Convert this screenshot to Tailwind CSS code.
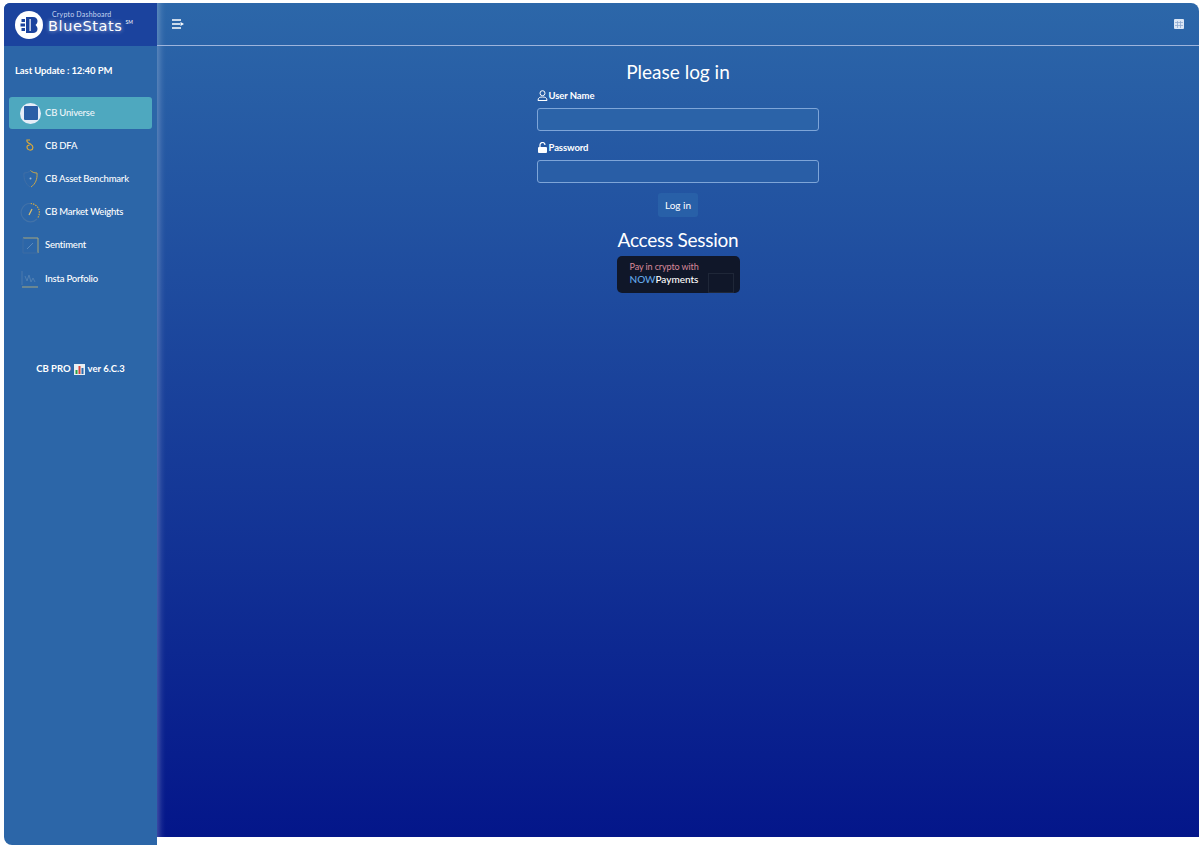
<!DOCTYPE html>
<html lang="en">
<head>
  <meta charset="UTF-8">
  <title>BlueStats</title>
  <script src="https://cdn.jsdelivr.net/npm/@tailwindcss/browser@4"></script>
</head>
<body class="h-[845px] overflow-hidden bg-white font-['Lato',sans-serif] text-white flex pl-[4px] pr-[1px] pt-[3px]">
  <!-- sidebar -->
  <aside class="w-[153px] shrink-0 bg-[#2c66a8] rounded-tl-[6px] rounded-bl-[8px] flex flex-col">
    <div class="h-[43px] shrink-0 rounded-tl-[6px] bg-[#1b439e] flex items-center pl-[11px] gap-[5px]">
      <svg class="w-[28px] h-[28px] shrink-0" viewBox="0 0 28 28">
        <circle cx="14" cy="14" r="14" fill="#fff"/>
        <path d="M11 6h7c3 0 4.500 2 4.500 4 0 2-1 3-2 4 1 1 2 2 2 4 0 2.500-2 4-4.500 4h-7z" fill="#1b439e"/>
        <path d="M14.500 8h1.200v12h-1.200z" fill="#fff"/>
        <path d="M6.500 8h3.500v3H6.500zM5.500 12.500H10v3H5.500zM6.500 17H10v3H6.500z" fill="#1b439e"/>
      </svg>
      <div class="flex flex-col -mt-[4px]">
        <span class="text-[7px] leading-[8px] tracking-[0.2px] text-[#c8d6f0] pl-[4px]">Crypto Dashboard</span>
        <div class="flex items-start">
          <span class="font-['DejaVu_Sans',sans-serif] text-[14.500px] leading-[17px] tracking-[0.6px] [text-shadow:0_0_4px_#ffffffaa]">BlueStats</span>
          <span class="text-[5px] leading-[8px] ml-[3px]">SM</span>
        </div>
      </div>
    </div>
    <p class="mt-[17px] pl-[11px] text-[9.500px] tracking-[-0.1px] leading-[16px] font-bold">Last Update : 12:40 PM</p>
    <nav class="mt-[18px] px-[5px] flex flex-col text-[9.500px] tracking-[-0.2px] font-medium">
      <a class="h-[32px] rounded-[3px] bg-[#4ea8bf] flex items-center pl-[11px] gap-[4px] text-[#eef6fa]">
        <span class="w-[21px] h-[21px] rounded-full bg-[#e6edf8] flex items-center justify-center shrink-0"><span class="w-[14px] h-[14px] bg-[#2a5ea6] rounded-[1px]"></span></span>
        CB Universe
      </a>
      <a class="h-[33.300px] flex items-center pl-[11px] gap-[4px]">
        <svg class="w-[21px] h-[21px] shrink-0" viewBox="0 0 21 21" fill="none" stroke="#d9a93a" stroke-width="1.200"><path d="M6.500 5h3.500M7 5c-1 2 1.500 3 4 4.500 2.500 1.300 2.500 5 0 5.500-2.500.3-4-1-4-3 0-1.500 1.500-2 2.500-1.500"/></svg>
        CB DFA
      </a>
      <a class="h-[33.300px] flex items-center pl-[11px] gap-[4px]">
        <svg class="w-[21px] h-[21px] shrink-0" viewBox="0 0 21 21" fill="none" stroke-width="1"><path d="M4 5c3 0 5-1 6.500-2.500" stroke="#3f6ea6"/><path d="M4 5c-.5 6 1.500 11 6 14" stroke="#3f6ea6"/><path d="M10.500 2.500C12 4 14 5 17 5c.5 6-1.500 11-6 14" stroke="#c9a64a"/><circle cx="10.500" cy="10.500" r="1" fill="#9db8d8"/></svg>
        CB Asset Benchmark
      </a>
      <a class="h-[33.300px] flex items-center pl-[11px] gap-[4px]">
        <svg class="w-[21px] h-[21px] shrink-0" viewBox="0 0 21 21" fill="none" stroke-width="1.200"><path d="M10.500 1.500a9 9 0 0 1 7 14.500" stroke="#c9a64a" stroke-dasharray="1.500 1"/><path d="M17 17a9 9 0 0 1-13 0A9 9 0 0 1 10.500 1.500" stroke="#4272a8"/><path d="M9 13l3-6" stroke="#d9bd70"/></svg>
        CB Market Weights
      </a>
      <a class="h-[33.300px] flex items-center pl-[11px] gap-[4px]">
        <svg class="w-[21px] h-[21px] shrink-0" viewBox="0 0 21 21" fill="none" stroke-width="1"><path d="M3 3h15v15" stroke="#a6a67c"/><path d="M18 18H3V3" stroke="#3d6ca4"/><path d="M7 14l6-6" stroke="#5c8abc"/></svg>
        Sentiment
      </a>
      <a class="h-[33.300px] flex items-center pl-[11px] gap-[4px]">
        <svg class="w-[21px] h-[21px] shrink-0" viewBox="0 0 21 21" fill="none" stroke-width="1"><path d="M2 3v14" stroke="#4b79ad"/><path d="M5 8l2 5 2-6 2 7 2-4 2 4" stroke="#4f7fb3"/><path d="M2 19h16" stroke="#a6a67c"/></svg>
        Insta Porfolio
      </a>
    </nav>
    <p class="mt-[66px] flex items-center justify-center gap-[3px] text-[9.500px] leading-[16px] font-bold">
      CB PRO
      <svg class="w-[11px] h-[11px]" viewBox="0 0 11 11"><rect width="11" height="11" fill="#e8eef2"/><rect x="1.500" y="6" width="2" height="4" fill="#2f9e44"/><rect x="4.500" y="2" width="2" height="8" fill="#d9423a"/><rect x="7.500" y="4" width="2" height="6" fill="#2b6cb0"/></svg>
      ver 6.C.3
    </p>
  </aside>

  <!-- main -->
  <main class="flex-1 h-[834px] rounded-tr-[8px] bg-[linear-gradient(to_bottom,#2c67a9,#04168a)] shadow-[inset_8px_0_7px_-6px_rgba(255,255,255,0.3)] flex flex-col">
    <header class="h-[43px] shrink-0 border-b border-[#9db4dc] flex items-center justify-between pl-[15px] pr-[15px]">
      <svg class="w-[12px] h-[10px] -mt-[1px]" viewBox="0 0 12 10" fill="none" stroke="#fff" stroke-width="1.400"><path d="M0 1h9M0 5h8M0 9h9"/><path d="M8.500 3l3.500 2-3.500 2z" fill="#fff" stroke="none"/></svg>
      <svg class="w-[10px] h-[10px] -mt-[1px]" viewBox="0 0 10 10"><rect width="10" height="10" rx="1" fill="#dbe6f5"/><path d="M1 3.500h8M1 6.500h8M3.500 2v7M6.500 2v7" stroke="#8fabd2" stroke-width=".8"/></svg>
    </header>
    <section class="w-[283px] mx-auto flex flex-col items-center">
      <h2 class="mt-[13px] text-[19px] leading-[26px]">Please log in</h2>
      <label class="self-start mt-[4px] flex items-center gap-[1px] text-[9.500px] tracking-[-0.1px] leading-[13px] font-bold">
        <svg class="w-[11px] h-[11px]" viewBox="0 0 11 11" fill="none" stroke="#fff"><circle cx="5.500" cy="3.200" r="2.500"/><path d="M1 10.500c0-3 2-3.500 4.500-3.500S10 7.500 10 10.500z"/></svg>
        User Name
      </label>
      <input type="text" class="mt-[6px] self-start w-[282px] h-[23px] rounded-[3px] border border-[#7ea5d8] bg-[#2b63a8]">
      <label class="self-start mt-[10px] flex items-center gap-[1px] text-[9.500px] tracking-[-0.1px] leading-[13px] font-bold">
        <svg class="w-[11px] h-[11px]" viewBox="0 0 11 11" fill="#fff"><rect x="1" y="5" width="9" height="6" rx="1"/><path d="M3 5V3a2.500 2.500 0 0 1 5 0" fill="none" stroke="#fff" stroke-width="1.200"/></svg>
        Password
      </label>
      <input type="password" class="mt-[6px] self-start w-[282px] h-[23px] rounded-[3px] border border-[#7ea5d8] bg-[#295ea6]">
      <button class="mt-[10px] w-[40px] h-[24px] rounded-[3px] bg-[#2860a8] text-[10px]">Log in</button>
      <h2 class="mt-[10px] text-[19px] tracking-[-0.25px] leading-[26px]">Access Session</h2>
      <div class="mt-[3px] w-[123px] h-[37px] rounded-[5px] bg-[#101729] pl-[13px] pt-[4px] relative overflow-hidden">
        <p class="text-[9px] tracking-[-0.1px] leading-[13px] text-[#d88a9a]">Pay in crypto with</p>
        <p class="text-[10px] leading-[13px] font-medium"><span class="text-[#63a7e8]">NOW</span>Payments</p>
        <span class="absolute right-[6px] bottom-0 w-[26px] h-[20px] border border-[#1f2738]"></span>
      </div>
    </section>
  </main>
</body>
</html>
